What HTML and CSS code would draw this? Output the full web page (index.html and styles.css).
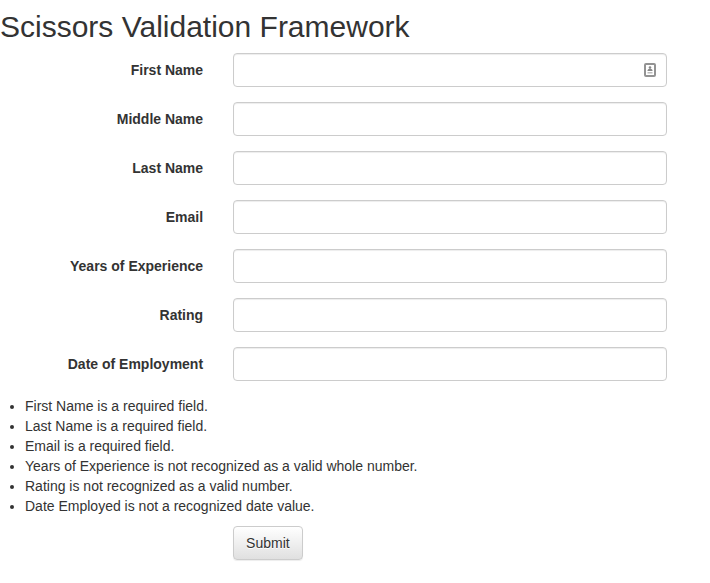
FILE: index.html
```html
<!DOCTYPE html>
<html lang="en">
<head>
<meta charset="utf-8">
<title>Scissors Validation Framework</title>
<link rel="stylesheet" href="styles.css">
</head>
<body>
<h2 class="title">Scissors Validation Framework</h2>
<form class="form" novalidate>
  <div class="form-group">
    <label class="label" for="first">First Name</label>
    <div class="field">
      <input class="control" id="first" type="text">
      <svg class="autofill" viewBox="0 0 12 14" aria-hidden="true">
        <rect class="card" x="1" y="1" width="10" height="12" rx="1"/>
        <circle class="ink" cx="6" cy="4.5" r="1.3"/>
        <path class="ink" d="M3.5 8V7.3Q3.5 6 6 5.6Q8.5 6 8.5 7.3V8Z"/>
        <path class="line" d="M3.5 9h5v1.5h-5Z"/>
      </svg>
    </div>
  </div>
  <div class="form-group">
    <label class="label" for="middle">Middle Name</label>
    <div class="field"><input class="control" id="middle" type="text"></div>
  </div>
  <div class="form-group">
    <label class="label" for="last">Last Name</label>
    <div class="field"><input class="control" id="last" type="text"></div>
  </div>
  <div class="form-group">
    <label class="label" for="email">Email</label>
    <div class="field"><input class="control" id="email" type="text"></div>
  </div>
  <div class="form-group">
    <label class="label" for="years">Years of Experience</label>
    <div class="field"><input class="control" id="years" type="text"></div>
  </div>
  <div class="form-group">
    <label class="label" for="rating">Rating</label>
    <div class="field"><input class="control" id="rating" type="text"></div>
  </div>
  <div class="form-group">
    <label class="label" for="employed">Date of Employment</label>
    <div class="field"><input class="control" id="employed" type="text"></div>
  </div>
  <ul class="errors">
    <li>First Name is a required field.</li>
    <li>Last Name is a required field.</li>
    <li>Email is a required field.</li>
    <li>Years of Experience is not recognized as a valid whole number.</li>
    <li>Rating is not recognized as a valid number.</li>
    <li>Date Employed is not a recognized date value.</li>
  </ul>
  <div class="form-group">
    <div class="actions"><button class="submit" type="submit">Submit</button></div>
  </div>
</form>
</body>
</html>
```
FILE: styles.css
```css
* {
  box-sizing: border-box;
}

body {
  margin: 0;
  background: #fff;
  color: #333;
  font-family: "Liberation Sans", Arial, sans-serif;
  font-size: 14px;
  line-height: 20px;
}

.title {
  margin: 10px 0;
  font-size: 30px;
  font-weight: 500;
  line-height: 33px;
}

.form-group {
  display: grid;
  grid-template-columns: 31% 63%;
  margin-bottom: 15px;
}

.label {
  padding: 7px 17px 0 0;
  font-weight: 700;
  text-align: right;
}

.field {
  position: relative;
  padding-left: 13px;
}

.control {
  display: block;
  width: 100%;
  height: 34px;
  padding: 6px 12px;
  border: 1px solid #ccc;
  border-radius: 4px;
  background: #fff;
  box-shadow: inset 0 1px 1px rgba(0, 0, 0, 0.075);
  color: #555;
  font: inherit;
}

.autofill {
  position: absolute;
  top: 10px;
  right: 11px;
  width: 12px;
  height: 14px;
}

.card {
  fill: #fff;
  stroke: #939393;
  stroke-width: 2;
}

.ink {
  fill: #888;
}

.line {
  fill: #bbb;
}

.errors {
  margin: 0 0 10px;
  padding-left: 25px;
}

.actions {
  grid-column: 2;
  padding-left: 13px;
}

.submit {
  height: 34px;
  padding: 6px 12px;
  border: 1px solid #ccc;
  border-radius: 4px;
  background: linear-gradient(#fff, #e0e0e0);
  box-shadow: inset 0 1px 0 rgba(255, 255, 255, 0.15), 0 1px 1px rgba(0, 0, 0, 0.075);
  color: #333;
  font: inherit;
  text-shadow: 0 1px 0 #fff;
}
```
